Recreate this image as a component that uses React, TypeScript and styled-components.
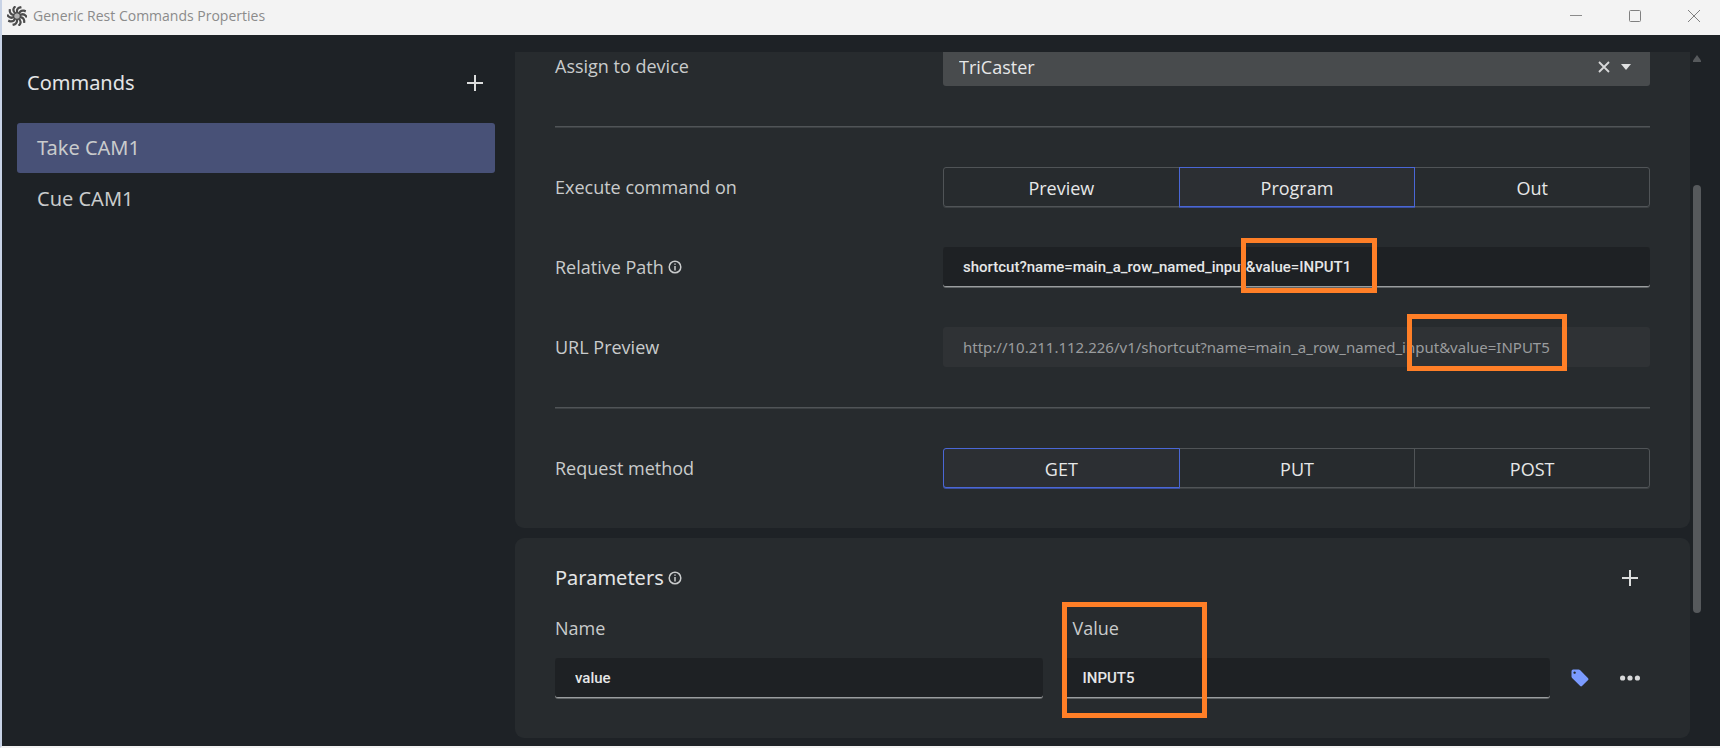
import React from "react";
import styled, { createGlobalStyle, css } from "styled-components";

const GlobalStyle = createGlobalStyle`
  * { box-sizing: border-box; }
  html, body, #root { height: 100%; }
  body { margin: 0; background: #1e2226; font-family: "Noto Sans", sans-serif; color: #c9cbcc; }
  button, input, select { font: inherit; color: inherit; margin: 0; }
  h1, h2, p, ul { margin: 0; padding: 0; font-weight: 400; }
`;

const Window = styled.div`
  display: flex;
  flex-direction: column;
  height: 100%;
  min-height: 600px;
  overflow: hidden;
  border-left: 2px solid #c8d3e6;
  border-bottom: 2px solid #f3f3f3;
`;

const TitleBar = styled.header`
  display: flex;
  align-items: center;
  flex: none;
  height: 35px;
  padding: 0 14px 4px 5px;
  gap: 6px;
  background: #f3f3f3;
`;

const WindowTitle = styled.h1`
  flex: 1;
  font-family: "Open Sans", sans-serif;
  font-size: 14px;
  line-height: 20px;
  color: #8b8b8b;
`;

const WindowButtons = styled.div`
  display: flex;
  gap: 35px;
`;

const IconButton = styled.button<{ $size?: number }>`
  display: grid;
  place-items: center;
  flex: none;
  width: ${(p) => p.$size ?? 24}px;
  height: ${(p) => p.$size ?? 24}px;
  padding: 0;
  border: 0;
  background: none;
  svg { display: block; }
`;

const Body = styled.div`
  display: flex;
  flex: 1;
  min-height: 0;
`;

const Sidebar = styled.aside`
  flex: 0 0 513px;
  padding: 32px 20px 0 15px;
`;

const SidebarHead = styled.div`
  display: flex;
  align-items: center;
  justify-content: space-between;
  height: 32px;
  padding: 0 8px 0 10px;
  margin-bottom: 24px;
`;

const Heading = styled.h2`
  font-size: 20px;
  line-height: 28px;
  color: #e4e5e6;
`;

const CommandList = styled.ul`
  list-style: none;
`;

const CommandButton = styled.button<{ $active?: boolean }>`
  display: block;
  width: 100%;
  height: 50px;
  margin-bottom: 1px;
  padding: 0 20px;
  border: 0;
  border-radius: 3px;
  text-align: left;
  font-size: 20px;
  line-height: 28px;
  background: ${(p) => (p.$active ? "#485177" : "transparent")};
`;

const Scroller = styled.main`
  flex: 1;
  min-width: 0;
  margin-top: 17px;
  overflow: hidden;
`;

const Card = styled.section<{ $scrolled?: boolean }>`
  padding: 40px;
  border-radius: 9px;
  background: #272b2e;
  ${(p) => p.$scrolled && css`margin-top: -46px; margin-bottom: 10px;`}
`;

const Stack = styled.div`
  display: flex;
  flex-direction: column;
  gap: 40px;
`;

const Row = styled.div`
  display: grid;
  grid-template-columns: 388fr 707fr;
  align-items: center;
`;

const Label = styled.label`
  display: flex;
  align-items: center;
  gap: 4px;
  font-family: "Open Sans", sans-serif;
  font-size: 18px;
  line-height: 24px;
`;

const Divider = styled.hr`
  width: 100%;
  height: 1px;
  margin: 0;
  border: 0;
  background: #505457;
  box-shadow: 0 1px #3c4043;
`;

const SelectBox = styled.div`
  display: flex;
  align-items: center;
  height: 40px;
  padding: 2px 14px 0 16px;
  border-radius: 3px;
  background: #484b4d;
`;

const DeviceSelect = styled.select`
  flex: 1;
  appearance: none;
  padding: 0;
  border: 0;
  background: transparent;
  color: #e6e7e8;
  font-family: "Open Sans", sans-serif;
  font-size: 18px;
  line-height: 24px;
`;

const Segments = styled.div`
  display: grid;
  grid-template-columns: repeat(3, 1fr);
`;

const Segment = styled.button<{ $active?: boolean }>`
  height: 40px;
  margin-right: -1px;
  padding: 2px 0 0;
  border: 1px solid #505457;
  background: none;
  color: #e6e7e8;
  font-family: "Open Sans", sans-serif;
  font-size: 18px;
  line-height: 24px;
  box-shadow: 0 1px #3c4043;
  &:first-child { border-radius: 3px 0 0 3px; }
  &:last-child { border-radius: 0 3px 3px 0; margin-right: 0; }
  ${(p) => p.$active && css`
    position: relative;
    border-color: #4a67d6;
    background: #2c2f33;
    box-shadow: 0 1px #3b4f9c;
  `}
`;

const Field = styled.div`
  position: relative;
`;

const TextInput = styled.input<{ $preview?: boolean }>`
  display: block;
  width: 100%;
  height: 40px;
  padding: 0 20px;
  border: 0;
  border-bottom: 1px solid #9a9d9f;
  border-radius: 3px;
  background: #1e2124;
  color: #e6e7e8;
  font-family: Roboto, sans-serif;
  font-weight: 500;
  font-size: 15px;
  box-shadow: 0 1px #606466;
  ${(p) => p.$preview && css`
    border-bottom: 0;
    box-shadow: none;
    background: #2f3235;
    color: #9a9c9e;
    font-family: "Noto Sans", sans-serif;
    font-weight: 400;
  `}
`;

const Highlight = styled.div<{ $left: number; $top: number; $width: number; $height: number }>`
  position: absolute;
  left: ${(p) => p.$left}px;
  top: ${(p) => p.$top}px;
  width: ${(p) => p.$width}px;
  height: ${(p) => p.$height}px;
  border: 5px solid #ff7f27;
  pointer-events: none;
`;

const ParamHead = styled.div`
  display: flex;
  align-items: center;
  justify-content: space-between;
  height: 24px;
  margin-top: -12px;
  padding-right: 8px;
`;

const HeadingGroup = styled.div`
  display: flex;
  align-items: center;
  gap: 4px;
`;

const ParamRow = styled.div`
  display: grid;
  grid-template-columns: 1fr 1fr 20px 40px;
  column-gap: 20px;
  align-items: end;
  margin-top: 26px;
`;

const ParamLabel = styled(Label)<{ $inset?: boolean }>`
  margin-bottom: 18px;
  padding-left: ${(p) => (p.$inset ? 10 : 0)}px;
`;

const ParamAction = styled.div`
  display: flex;
  align-items: center;
  justify-content: center;
  height: 40px;
`;

const Gutter = styled.div`
  display: flex;
  flex-direction: column;
  align-items: center;
  flex: 0 0 30px;
  padding: 20px 16px 0 0;
`;

const Thumb = styled.div`
  width: 8px;
  height: 62%;
  margin-top: 123px;
  border-radius: 4px;
  background: #56595c;
`;

const blades = Array.from({ length: 10 }, (_, i) => i * 36);

const AppLogo = () => (
  <svg width="20" height="20" viewBox="-10 -10 20 20" aria-hidden="true">
    <circle r="4" fill="#a0a0a0" />
    {blades.map((a) => (
      <path
        key={a}
        d="M0.4 -2.4C-0.6 -5 0.4 -7.4 2.4 -8.4L4.4 -8.9"
        transform={`rotate(${a})`}
        fill="none"
        stroke="#4c4c4c"
        strokeWidth="2.2"
      />
    ))}
    <circle r="2.6" fill="#b0b0b0" />
  </svg>
);

const Plus = () => (
  <svg width="16" height="16" viewBox="0 0 16 16" aria-hidden="true">
    <path d="M8 0v16M0 8h16" stroke="#dcdddd" strokeWidth="2" />
  </svg>
);

const Info = () => (
  <svg width="14" height="14" viewBox="0 0 14 14" aria-hidden="true">
    <circle cx="7" cy="7" r="5.8" fill="none" stroke="#c9cbcc" strokeWidth="1.5" />
    <path d="M7 3.4v1.4M7 6v4.4" stroke="#c9cbcc" strokeWidth="1.5" />
  </svg>
);

function SegmentGroup({ label, options, active }: { label: string; options: string[]; active: string }) {
  return (
    <Segments role="group" aria-label={label}>
      {options.map((o) => (
        <Segment key={o} type="button" $active={o === active} aria-pressed={o === active}>
          {o}
        </Segment>
      ))}
    </Segments>
  );
}

export default function App() {
  return (
    <>
      <GlobalStyle />
      <Window>
        <TitleBar>
          <AppLogo />
          <WindowTitle>Generic Rest Commands Properties</WindowTitle>
          <WindowButtons>
            <IconButton aria-label="Minimize">
              <svg width="12" height="12" viewBox="0 0 12 12"><path d="M0 5.5h12" stroke="#8b8b8b" /></svg>
            </IconButton>
            <IconButton aria-label="Maximize">
              <svg width="12" height="12" viewBox="0 0 12 12"><rect x="0.5" y="0.5" width="11" height="11" rx="1" fill="none" stroke="#808080" /></svg>
            </IconButton>
            <IconButton aria-label="Close">
              <svg width="12" height="12" viewBox="0 0 12 12"><path d="M0 0l12 12M12 0L0 12" stroke="#808080" /></svg>
            </IconButton>
          </WindowButtons>
        </TitleBar>
        <Body>
          <Sidebar>
            <SidebarHead>
              <Heading>Commands</Heading>
              <IconButton aria-label="Add command"><Plus /></IconButton>
            </SidebarHead>
            <CommandList>
              <li><CommandButton $active>Take CAM1</CommandButton></li>
              <li><CommandButton>Cue CAM1</CommandButton></li>
            </CommandList>
          </Sidebar>
          <Scroller>
            <Card $scrolled>
              <Stack>
                <Row>
                  <Label htmlFor="device">Assign to device</Label>
                  <SelectBox>
                    <DeviceSelect id="device" defaultValue="TriCaster">
                      <option>TriCaster</option>
                    </DeviceSelect>
                    <IconButton aria-label="Clear device">
                      <svg width="12" height="12" viewBox="0 0 12 12"><path d="M1 1l10 10M11 1L1 11" stroke="#d8d9da" strokeWidth="1.8" /></svg>
                    </IconButton>
                    <IconButton aria-label="Open device list" $size={20}>
                      <svg width="10" height="6" viewBox="0 0 10 6"><path d="M0 0h10L5 6z" fill="#e0e1e2" /></svg>
                    </IconButton>
                  </SelectBox>
                </Row>
                <Divider />
                <Row>
                  <Label as="span">Execute command on</Label>
                  <SegmentGroup label="Execute command on" options={["Preview", "Program", "Out"]} active="Program" />
                </Row>
                <Row>
                  <Label htmlFor="path">Relative Path<Info /></Label>
                  <Field>
                    <TextInput id="path" defaultValue="shortcut?name=main_a_row_named_input&value=INPUT1" />
                    <Highlight $left={298} $top={-9} $width={136} $height={55} />
                  </Field>
                </Row>
                <Row>
                  <Label htmlFor="url">URL Preview</Label>
                  <Field>
                    <TextInput id="url" $preview readOnly value="http://10.211.112.226/v1/shortcut?name=main_a_row_named_input&value=INPUT5" />
                    <Highlight $left={464} $top={-13} $width={160} $height={57} />
                  </Field>
                </Row>
                <Divider />
                <Row>
                  <Label as="span">Request method</Label>
                  <SegmentGroup label="Request method" options={["GET", "PUT", "POST"]} active="GET" />
                </Row>
              </Stack>
            </Card>
            <Card>
              <ParamHead>
                <HeadingGroup><Heading>Parameters</Heading><Info /></HeadingGroup>
                <IconButton aria-label="Add parameter"><Plus /></IconButton>
              </ParamHead>
              <ParamRow>
                <Field>
                  <ParamLabel htmlFor="p-name">Name</ParamLabel>
                  <TextInput id="p-name" defaultValue="value" />
                </Field>
                <Field>
                  <ParamLabel htmlFor="p-value" $inset>Value</ParamLabel>
                  <TextInput id="p-value" defaultValue="INPUT5" />
                  <Highlight $left={-1} $top={-14} $width={145} $height={116} />
                </Field>
                <ParamAction>
                  <IconButton aria-label="Insert tag">
                    <svg width="18" height="18" viewBox="0 0 18 18">
                      <path fillRule="evenodd" d="M0.5 2.2Q0.5 0.5 2.2 0.5H7.6Q8.4 0.5 9 1.1L17.1 9.2Q18 10.1 17.1 11L11 17.1Q10.1 18 9.2 17.1L1.1 9Q0.5 8.4 0.5 7.6ZM3.6 2.4a1.2 1.2 0 1 0 .01 0Z" fill="#7b9bff" />
                    </svg>
                  </IconButton>
                </ParamAction>
                <ParamAction>
                  <IconButton aria-label="More options">
                    <svg width="20" height="6" viewBox="0 0 20 6" fill="#d8d9da"><circle cx="2.6" cy="3" r="2.6" /><circle cx="10" cy="3" r="2.6" /><circle cx="17.4" cy="3" r="2.6" /></svg>
                  </IconButton>
                </ParamAction>
              </ParamRow>
            </Card>
          </Scroller>
          <Gutter aria-hidden="true">
            <svg width="8" height="7" viewBox="0 0 8 7"><path d="M4 0L8 5.5V7H0V5.5z" fill="#56595c" /></svg>
            <Thumb />
          </Gutter>
        </Body>
      </Window>
    </>
  );
}
